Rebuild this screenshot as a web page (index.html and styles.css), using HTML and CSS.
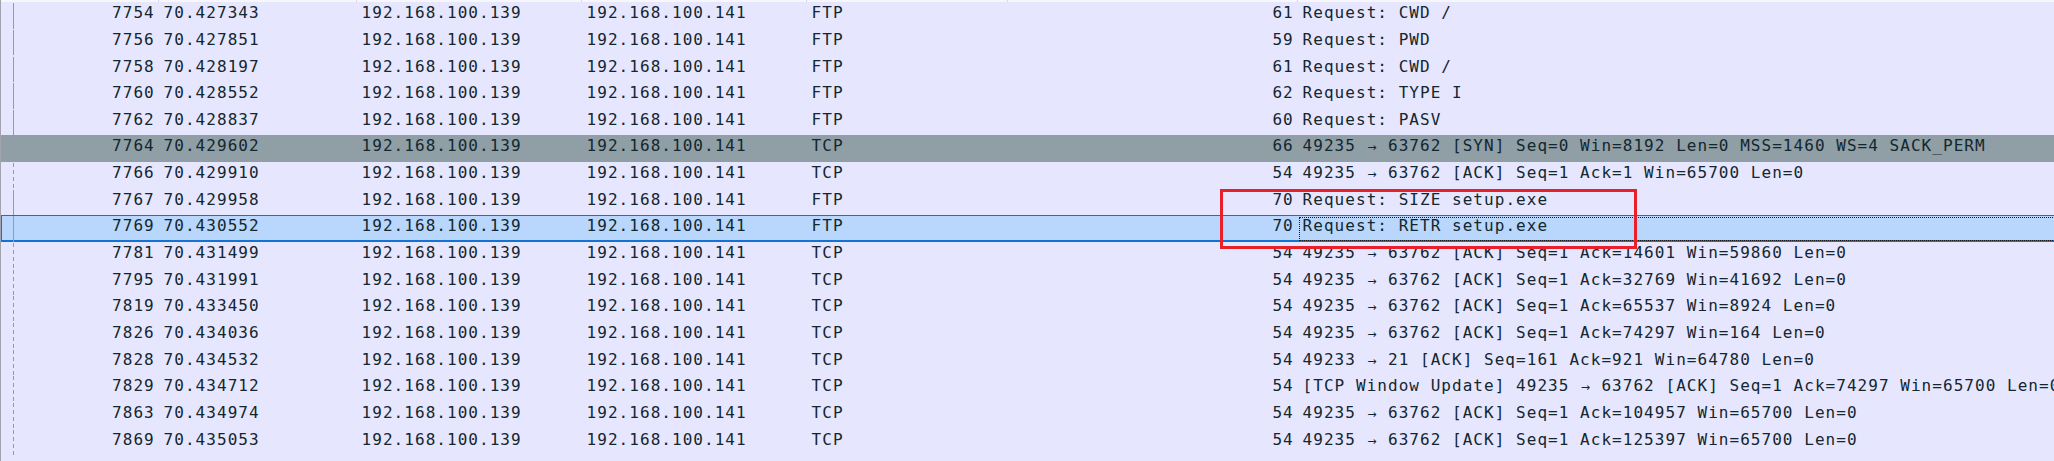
FILE: index.html
```html
<!DOCTYPE html>
<html>
<head>
<meta charset="utf-8">
<link rel="stylesheet" href="styles.css">
</head>
<body>
<div class="pane">
  <div class="hdr">
    <span class="hc c-no"></span><span class="hc c-time"></span><span class="hc c-src"></span><span class="hc c-dst"></span><span class="hc c-proto"></span><span class="hc c-len"></span><span class="hc c-info"></span>
  </div>
  <div class="list">
    <div class="row solid"><span class="c-no">7754</span><span class="c-time">70.427343</span><span class="c-src">192.168.100.139</span><span class="c-dst">192.168.100.141</span><span class="c-proto">FTP</span><span class="c-len">61</span><span class="c-info">Request: CWD /</span></div>
    <div class="row solid"><span class="c-no">7756</span><span class="c-time">70.427851</span><span class="c-src">192.168.100.139</span><span class="c-dst">192.168.100.141</span><span class="c-proto">FTP</span><span class="c-len">59</span><span class="c-info">Request: PWD</span></div>
    <div class="row solid"><span class="c-no">7758</span><span class="c-time">70.428197</span><span class="c-src">192.168.100.139</span><span class="c-dst">192.168.100.141</span><span class="c-proto">FTP</span><span class="c-len">61</span><span class="c-info">Request: CWD /</span></div>
    <div class="row solid"><span class="c-no">7760</span><span class="c-time">70.428552</span><span class="c-src">192.168.100.139</span><span class="c-dst">192.168.100.141</span><span class="c-proto">FTP</span><span class="c-len">62</span><span class="c-info">Request: TYPE I</span></div>
    <div class="row solid"><span class="c-no">7762</span><span class="c-time">70.428837</span><span class="c-src">192.168.100.139</span><span class="c-dst">192.168.100.141</span><span class="c-proto">FTP</span><span class="c-len">60</span><span class="c-info">Request: PASV</span></div>
    <div class="row syn"><span class="c-no">7764</span><span class="c-time">70.429602</span><span class="c-src">192.168.100.139</span><span class="c-dst">192.168.100.141</span><span class="c-proto">TCP</span><span class="c-len">66</span><span class="c-info">49235 <span class="ar">→</span> 63762 [SYN] Seq=0 Win=8192 Len=0 MSS=1460 WS=4 SACK_PERM</span></div>
    <div class="row dashed"><span class="c-no">7766</span><span class="c-time">70.429910</span><span class="c-src">192.168.100.139</span><span class="c-dst">192.168.100.141</span><span class="c-proto">TCP</span><span class="c-len">54</span><span class="c-info">49235 <span class="ar">→</span> 63762 [ACK] Seq=1 Ack=1 Win=65700 Len=0</span></div>
    <div class="row solid"><span class="c-no">7767</span><span class="c-time">70.429958</span><span class="c-src">192.168.100.139</span><span class="c-dst">192.168.100.141</span><span class="c-proto">FTP</span><span class="c-len">70</span><span class="c-info">Request: SIZE setup.exe</span></div>
    <div class="row solid selected"><span class="c-no">7769</span><span class="c-time">70.430552</span><span class="c-src">192.168.100.139</span><span class="c-dst">192.168.100.141</span><span class="c-proto">FTP</span><span class="c-len">70</span><span class="c-info focus">Request: RETR setup.exe</span></div>
    <div class="row dashed"><span class="c-no">7781</span><span class="c-time">70.431499</span><span class="c-src">192.168.100.139</span><span class="c-dst">192.168.100.141</span><span class="c-proto">TCP</span><span class="c-len">54</span><span class="c-info">49235 <span class="ar">→</span> 63762 [ACK] Seq=1 Ack=14601 Win=59860 Len=0</span></div>
    <div class="row dashed"><span class="c-no">7795</span><span class="c-time">70.431991</span><span class="c-src">192.168.100.139</span><span class="c-dst">192.168.100.141</span><span class="c-proto">TCP</span><span class="c-len">54</span><span class="c-info">49235 <span class="ar">→</span> 63762 [ACK] Seq=1 Ack=32769 Win=41692 Len=0</span></div>
    <div class="row dashed"><span class="c-no">7819</span><span class="c-time">70.433450</span><span class="c-src">192.168.100.139</span><span class="c-dst">192.168.100.141</span><span class="c-proto">TCP</span><span class="c-len">54</span><span class="c-info">49235 <span class="ar">→</span> 63762 [ACK] Seq=1 Ack=65537 Win=8924 Len=0</span></div>
    <div class="row dashed"><span class="c-no">7826</span><span class="c-time">70.434036</span><span class="c-src">192.168.100.139</span><span class="c-dst">192.168.100.141</span><span class="c-proto">TCP</span><span class="c-len">54</span><span class="c-info">49235 <span class="ar">→</span> 63762 [ACK] Seq=1 Ack=74297 Win=164 Len=0</span></div>
    <div class="row dashed"><span class="c-no">7828</span><span class="c-time">70.434532</span><span class="c-src">192.168.100.139</span><span class="c-dst">192.168.100.141</span><span class="c-proto">TCP</span><span class="c-len">54</span><span class="c-info">49233 <span class="ar">→</span> 21 [ACK] Seq=161 Ack=921 Win=64780 Len=0</span></div>
    <div class="row dashed"><span class="c-no">7829</span><span class="c-time">70.434712</span><span class="c-src">192.168.100.139</span><span class="c-dst">192.168.100.141</span><span class="c-proto">TCP</span><span class="c-len">54</span><span class="c-info">[TCP Window Update] 49235 <span class="ar">→</span> 63762 [ACK] Seq=1 Ack=74297 Win=65700 Len=0</span></div>
    <div class="row dashed"><span class="c-no">7863</span><span class="c-time">70.434974</span><span class="c-src">192.168.100.139</span><span class="c-dst">192.168.100.141</span><span class="c-proto">TCP</span><span class="c-len">54</span><span class="c-info">49235 <span class="ar">→</span> 63762 [ACK] Seq=1 Ack=104957 Win=65700 Len=0</span></div>
    <div class="row dashed"><span class="c-no">7869</span><span class="c-time">70.435053</span><span class="c-src">192.168.100.139</span><span class="c-dst">192.168.100.141</span><span class="c-proto">TCP</span><span class="c-len">54</span><span class="c-info">49235 <span class="ar">→</span> 63762 [ACK] Seq=1 Ack=125397 Win=65700 Len=0</span></div>
  </div>
  <div class="mark"></div>
</div>
</body>
</html>
```

FILE: styles.css
```css
html, body {
  margin: 0;
  padding: 0;
  background: #e7e6ff;
  overflow: hidden;
}

.pane {
  position: relative;
  width: 2054px;
  height: 461px;
  background: #e7e6ff;
  border-left: 1px solid #a3a3b0;
  box-sizing: border-box;
  font-family: "DejaVu Sans Mono", "Liberation Mono", monospace;
  font-size: 16px;
  letter-spacing: 1.04px;
  color: #12272e;
  overflow: hidden;
}

.hdr {
  display: flex;
  height: 2px;
  background: #f6f6fb;
}

.hc {
  height: 2px;
  border-right: 1px solid #d8d8e2;
  box-sizing: border-box;
  padding: 0;
  flex: none;
}

.list {
  display: flex;
  flex-direction: column;
}

.row {
  display: flex;
  height: 26.67px;
  box-sizing: border-box;
  padding-top: 1.2px;
  line-height: 20px;
  white-space: nowrap;
}

.row > span {
  box-sizing: border-box;
  padding: 0 5.3px 0 4.6px;
  flex: none;
  overflow: hidden;
}

.c-no { width: 158px; text-align: right; }
.c-time { width: 198px; }
.c-src { width: 225px; }
.c-dst { width: 225px; }
.c-proto { width: 201px; }
.c-len { width: 290px; text-align: right; }
.c-info { width: 1200px; }

.row > .c-no,
.row > .c-len { padding-right: 4.26px; }

.hc.c-info { border-right: none; }

.row.solid .c-no {
  background: linear-gradient(#9a9aa6, #9a9aa6) no-repeat 12px 0 / 1px 100%;
}

.row.dashed .c-no {
  background: repeating-linear-gradient(to bottom, #9a9aa6 0 4px, transparent 4px 7px) no-repeat 12px 0 / 1px 100%;
}

.row.syn {
  background: #909ea6;
}

.row.selected {
  background: #b9d6fc;
  box-shadow: inset 1px 1px 0 #1273d2, inset 0 -2px 0 #1273d2;
}

.focus {
  outline: 1px dotted #1a1a1a;
  outline-offset: -2px;
}

.ar {
  display: inline-block;
  width: 10.67px;
  letter-spacing: 0;
  text-align: center;
  font-family: "DejaVu Sans", sans-serif;
  font-size: 11px;
}

.mark {
  position: absolute;
  left: 1218.5px;
  top: 189px;
  width: 417px;
  height: 60px;
  box-sizing: border-box;
  border: 3px solid #e8202a;
}
```
